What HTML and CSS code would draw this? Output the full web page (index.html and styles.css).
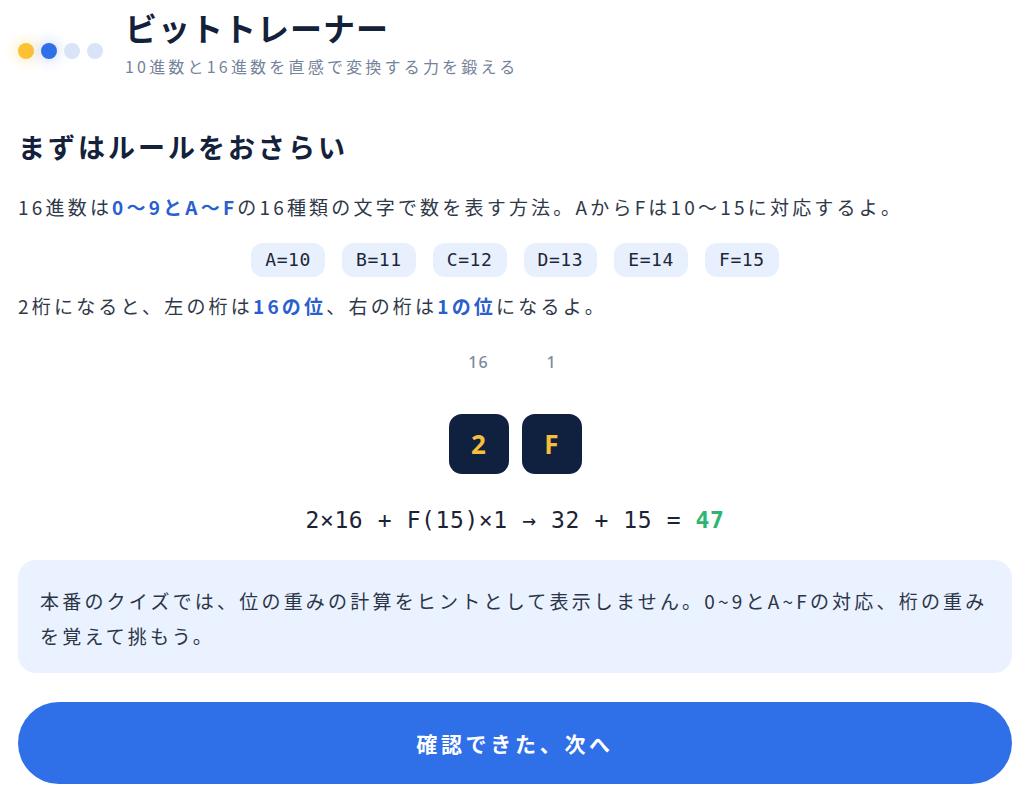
FILE: index.html
```html
<!DOCTYPE html>
<html lang="ja">
<head>
<meta charset="utf-8">
<title>ビットトレーナー</title>
<link rel="stylesheet" href="styles.css">
</head>
<body>
<div class="page">
  <header class="header">
    <div class="dots">
      <span class="dot dot-yellow"></span>
      <span class="dot dot-blue"></span>
      <span class="dot dot-light"></span>
      <span class="dot dot-light"></span>
    </div>
    <div class="titles">
      <h1 class="title">ビットトレーナー</h1>
      <p class="subtitle">10進数と16進数を直感で変換する力を鍛える</p>
    </div>
  </header>

  <h2 class="heading">まずはルールをおさらい</h2>
  <p class="text">16進数は<b class="hl">0〜9とA〜F</b>の16種類の文字で数を表す方法。AからFは10〜15に対応するよ。</p>
  <div class="chips">
    <span class="chip">A=10</span>
    <span class="chip">B=11</span>
    <span class="chip">C=12</span>
    <span class="chip">D=13</span>
    <span class="chip">E=14</span>
    <span class="chip">F=15</span>
  </div>
  <p class="text text-2">2桁になると、左の桁は<b class="hl">16の位</b>、右の桁は<b class="hl">1の位</b>になるよ。</p>

  <div class="digits">
    <div class="digit-col">
      <span class="weight">16</span>
      <span class="box">2</span>
    </div>
    <div class="digit-col">
      <span class="weight">1</span>
      <span class="box">F</span>
    </div>
  </div>

  <p class="equation">2×16 + F(15)×1 → 32 + 15 = <b class="result">47</b></p>

  <div class="note">本番のクイズでは、位の重みの計算をヒントとして表示しません。0~9とA~Fの対応、桁の重みを覚えて挑もう。</div>

  <button class="next" type="button">確認できた、次へ</button>
</div>
</body>
</html>
```

FILE: styles.css
```css
* { box-sizing: border-box; }
html, body { margin: 0; padding: 0; background: #ffffff; }
body {
  font-family: "Noto Sans CJK JP", "Noto Sans", sans-serif;
  color: #2c3547;
}
.page {
  padding: 0 12px 0 18px;
}
.header {
  display: flex;
  align-items: center;
  gap: 22px;
  padding-top: 8px;
}
.dots {
  display: flex;
  gap: 7px;
  margin-top: 16px;
}
.dot {
  width: 16px;
  height: 16px;
  border-radius: 50%;
  display: block;
}
.dot-yellow { background: #fcc233; box-shadow: 0 0 12px 4px rgba(252, 194, 51, 0.22); }
.dot-blue { background: #2f6fe8; box-shadow: 0 0 12px 4px rgba(47, 111, 232, 0.16); }
.dot-light { background: #d9e4f8; }
.titles { display: flex; flex-direction: column; }
.title {
  margin: 0;
  font-size: 32px;
  line-height: 38px;
  font-weight: 700;
  letter-spacing: 1px;
  color: #13213b;
}
.subtitle {
  margin: 8px 0 0;
  font-size: 16px;
  line-height: 24px;
  letter-spacing: 3.2px;
  color: #74839a;
}
.heading {
  margin: 51px 0 0;
  font-size: 27px;
  line-height: 36px;
  font-weight: 700;
  letter-spacing: 3px;
  color: #13213b;
}
.text {
  margin: 27px 0 0;
  font-size: 19px;
  line-height: 30px;
  letter-spacing: 3.2px;
  color: #2f3848;
}
.text-2 { margin-top: 14px; }
.hl { color: #2b5fce; font-weight: 700; }
.chips {
  display: flex;
  justify-content: center;
  gap: 17px;
  margin-top: 21px;
}
.chip {
  height: 34px;
  line-height: 34px;
  padding: 0 14px;
  border-radius: 12px;
  background: #e8f0fd;
  font-family: "DejaVu Sans Mono", "Liberation Mono", monospace;
  font-size: 18px;
  letter-spacing: 0.6px;
  color: #1d2638;
}
.digits {
  display: flex;
  justify-content: center;
  gap: 13px;
  margin-top: 31px;
}
.digit-col {
  display: flex;
  flex-direction: column;
  align-items: center;
  gap: 42px;
}
.weight {
  font-size: 16px;
  line-height: 20px;
  letter-spacing: 1px;
  color: #7d8aa0;
  font-family: "Noto Sans", sans-serif;
  font-weight: 500;
}
.box {
  width: 60px;
  height: 60px;
  border-radius: 13px;
  background: #10213f;
  color: #f6bf3b;
  display: flex;
  align-items: center;
  justify-content: center;
  font-family: "Noto Sans", sans-serif;
  font-size: 26px;
  font-weight: 700;
}
.equation {
  margin: 31px 0 0;
  text-align: center;
  font-family: "DejaVu Sans Mono", "Liberation Mono", monospace;
  font-size: 23px;
  line-height: 30px;
  letter-spacing: 0.6px;
  color: #1b2436;
}
.result { color: #2bb673; font-weight: 700; }
.note {
  margin-top: 25px;
  background: #eaf2ff;
  border-radius: 18px;
  padding: 23px 22px 20px;
  font-size: 19px;
  line-height: 35px;
  letter-spacing: 3.2px;
  color: #2c3547;
}
.next {
  display: block;
  width: 100%;
  margin-top: 29px;
  height: 82px;
  border: none;
  border-radius: 41px;
  background: #2f6fe8;
  color: #ffffff;
  font-family: "Noto Sans CJK JP", "Noto Sans", sans-serif;
  font-size: 21px;
  letter-spacing: 3.7px;
  font-weight: 700;
  cursor: pointer;
}
```
